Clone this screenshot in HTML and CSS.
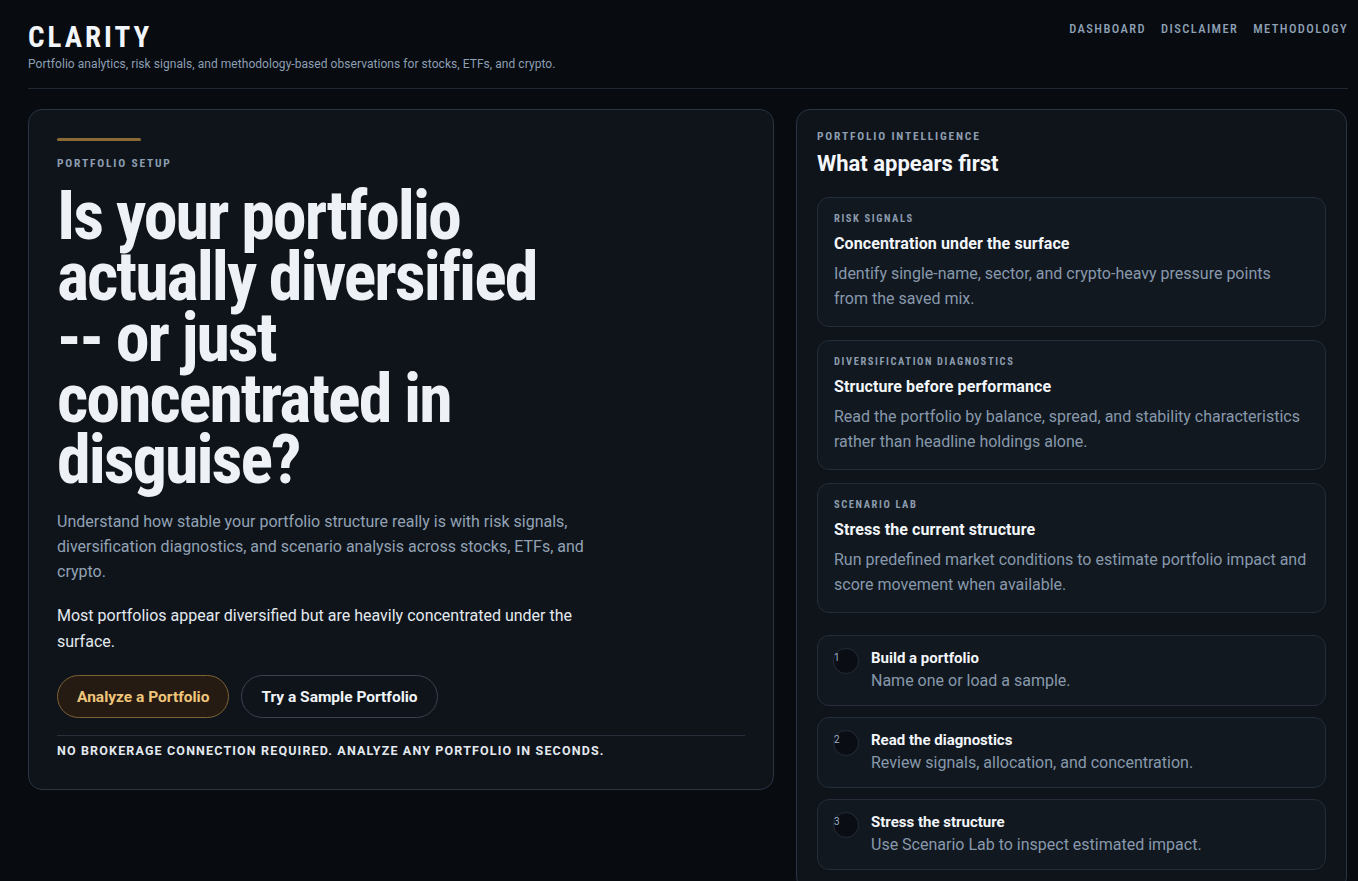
FILE: index.html
```html
<!DOCTYPE html>
<html lang="en">
<head>
<meta charset="utf-8">
<title>Clarity — Portfolio analytics</title>
<link rel="stylesheet" href="styles.css">
</head>
<body>
<div class="page">
  <header class="site-header">
    <div class="brand">
      <div class="brand-name">CLARITY</div>
      <div class="brand-tagline">Portfolio analytics, risk signals, and methodology-based observations for stocks, ETFs, and crypto.</div>
    </div>
    <nav class="main-nav">
      <a href="#">DASHBOARD</a>
      <a href="#">DISCLAIMER</a>
      <a href="#">METHODOLOGY</a>
    </nav>
  </header>

  <main class="layout">
    <section class="card hero">
      <div class="accent-bar"></div>
      <div class="eyebrow">PORTFOLIO SETUP</div>
      <h1 class="hero-title">Is your portfolio actually diversified -- or just concentrated in disguise?</h1>
      <p class="hero-lead">Understand how stable your portfolio structure really is with risk signals, diversification diagnostics, and scenario analysis across stocks, ETFs, and crypto.</p>
      <p class="hero-note">Most portfolios appear diversified but are heavily concentrated under the surface.</p>
      <div class="actions">
        <a href="#" class="btn btn-primary">Analyze a Portfolio</a>
        <a href="#" class="btn btn-ghost">Try a Sample Portfolio</a>
      </div>
      <div class="hero-foot">NO BROKERAGE CONNECTION REQUIRED. ANALYZE ANY PORTFOLIO IN SECONDS.</div>
    </section>

    <aside class="card intel">
      <div class="eyebrow">PORTFOLIO INTELLIGENCE</div>
      <h2 class="intel-title">What appears first</h2>

      <div class="features">
        <article class="feature">
          <div class="feature-label">RISK SIGNALS</div>
          <h3 class="feature-title">Concentration under the surface</h3>
          <p class="feature-text">Identify single-name, sector, and crypto-heavy pressure points from the saved mix.</p>
        </article>
        <article class="feature">
          <div class="feature-label">DIVERSIFICATION DIAGNOSTICS</div>
          <h3 class="feature-title">Structure before performance</h3>
          <p class="feature-text">Read the portfolio by balance, spread, and stability characteristics rather than headline holdings alone.</p>
        </article>
        <article class="feature">
          <div class="feature-label">SCENARIO LAB</div>
          <h3 class="feature-title">Stress the current structure</h3>
          <p class="feature-text">Run predefined market conditions to estimate portfolio impact and score movement when available.</p>
        </article>
      </div>

      <ol class="steps">
        <li class="step">
          <span class="step-num">1</span>
          <div class="step-body">
            <div class="step-title">Build a portfolio</div>
            <div class="step-text">Name one or load a sample.</div>
          </div>
        </li>
        <li class="step">
          <span class="step-num">2</span>
          <div class="step-body">
            <div class="step-title">Read the diagnostics</div>
            <div class="step-text">Review signals, allocation, and concentration.</div>
          </div>
        </li>
        <li class="step">
          <span class="step-num">3</span>
          <div class="step-body">
            <div class="step-title">Stress the structure</div>
            <div class="step-text">Use Scenario Lab to inspect estimated impact.</div>
          </div>
        </li>
      </ol>
    </aside>
  </main>
</div>
</body>
</html>
```
FILE: styles.css
```css
* { box-sizing: border-box; }

html, body {
  margin: 0;
  background: #080b10;
  color: #eef2f6;
  font-family: Roboto, "Liberation Sans", sans-serif;
}

a { color: inherit; text-decoration: none; }

.page {
  width: 1320px;
  margin-left: 28px;
}

/* condensed face for display type and caps labels */
.brand-name,
.main-nav a,
.eyebrow,
.feature-label,
.hero-title {
  font-family: "Roboto Condensed", Roboto, sans-serif;
}

/* ---------- header ---------- */
.site-header {
  display: flex;
  justify-content: space-between;
  align-items: flex-start;
  padding-top: 22px;
  padding-bottom: 16px;
  border-bottom: 1px solid #1f2833;
}

.brand-name {
  font-size: 29px;
  font-weight: 700;
  letter-spacing: 3px;
  line-height: 30px;
  color: #f3f6f9;
}

.brand-tagline {
  margin-top: 4px;
  font-size: 12px;
  line-height: 16px;
  letter-spacing: 0.05px;
  color: #8d9fb3;
}

.main-nav {
  display: flex;
  gap: 15px;
  margin-top: -1px;
}

.main-nav a {
  font-size: 12.5px;
  font-weight: 500;
  letter-spacing: 1.4px;
  line-height: 16px;
  color: #8ea1b6;
}

/* ---------- layout ---------- */
.layout {
  display: grid;
  grid-template-columns: 746px 551px;
  gap: 22px;
  align-items: start;
  margin-top: 20px;
}

.card {
  background: #0f141b;
  border: 1px solid #2a3443;
  border-radius: 14px;
}

.eyebrow {
  font-size: 11.5px;
  font-weight: 700;
  letter-spacing: 1.8px;
  line-height: 16px;
  color: #8c9db0;
}

/* ---------- hero ---------- */
.hero {
  padding: 28px 28px 30px;
}

.accent-bar {
  width: 84px;
  height: 3px;
  background: #8b6a36;
  border-radius: 2px;
  margin-bottom: 14px;
}

.hero-title {
  margin: 15px 0 0;
  max-width: 505px;
  font-size: 68px;
  font-weight: 700;
  line-height: 61px;
  letter-spacing: -2px;
  color: #eef2f6;
}

.hero-lead {
  margin: 18px 0 0;
  max-width: 560px;
  font-size: 16px;
  line-height: 25px;
  color: #92a2b4;
}

.hero-note {
  margin: 19px 0 0;
  max-width: 560px;
  font-size: 16px;
  line-height: 26px;
  color: #e3e9ef;
}

.actions {
  display: flex;
  gap: 12px;
  margin-top: 20px;
}

.btn {
  display: inline-flex;
  align-items: center;
  height: 43px;
  padding: 0 19px;
  border-radius: 22px;
  font-size: 15.5px;
  font-weight: 700;
}

.btn-primary {
  background: #251b12;
  border: 1px solid #7e6236;
  color: #efc57a;
}

.btn-ghost {
  background: transparent;
  border: 1px solid #39424f;
  color: #f1f4f7;
}

.hero-foot {
  margin-top: 17px;
  padding-top: 7px;
  border-top: 1px solid #27303b;
  font-size: 12.5px;
  font-weight: 700;
  letter-spacing: 1.15px;
  line-height: 16px;
  color: #e3e9ef;
}

/* ---------- intelligence panel ---------- */
.intel {
  padding: 18px 20px 20px;
}

.intel-title {
  margin: 6px 0 0;
  font-size: 22px;
  font-weight: 700;
  line-height: 28px;
  color: #f4f7fa;
}

.features {
  display: flex;
  flex-direction: column;
  gap: 13px;
  margin-top: 19px;
}

.feature {
  background: #111820;
  border: 1px solid #242d39;
  border-radius: 12px;
  padding: 14px 16px 15px;
}

.feature-label {
  font-size: 10.5px;
  font-weight: 700;
  letter-spacing: 1.6px;
  line-height: 14px;
  color: #8c9cae;
}

.feature-title {
  margin: 7px 0 0;
  font-size: 16px;
  font-weight: 700;
  line-height: 22px;
  letter-spacing: 0.1px;
  color: #f3f6f9;
}

.feature-text {
  margin: 6px 0 0;
  max-width: 473px;
  font-size: 16px;
  line-height: 25px;
  color: #8898ab;
}

.steps {
  list-style: none;
  margin: 22px 0 0;
  padding: 0;
  display: flex;
  flex-direction: column;
  gap: 11px;
}

.step {
  display: flex;
  gap: 12px;
  align-items: flex-start;
  background: #111820;
  border: 1px solid #242d39;
  border-radius: 12px;
  padding: 12px 16px 13px;
}

.step-num {
  flex: none;
  width: 26px;
  height: 26px;
  margin-left: -1px;
  border-radius: 50%;
  background: #0a0e14;
  border: 1px solid #242c38;
  font-size: 10px;
  line-height: 17px;
  color: #9cb0c6;
}

.step-title {
  font-size: 15px;
  font-weight: 700;
  line-height: 20px;
  color: #f3f6f9;
}

.step-text {
  margin-top: 2px;
  font-size: 16px;
  line-height: 22px;
  color: #8898ab;
}
```
